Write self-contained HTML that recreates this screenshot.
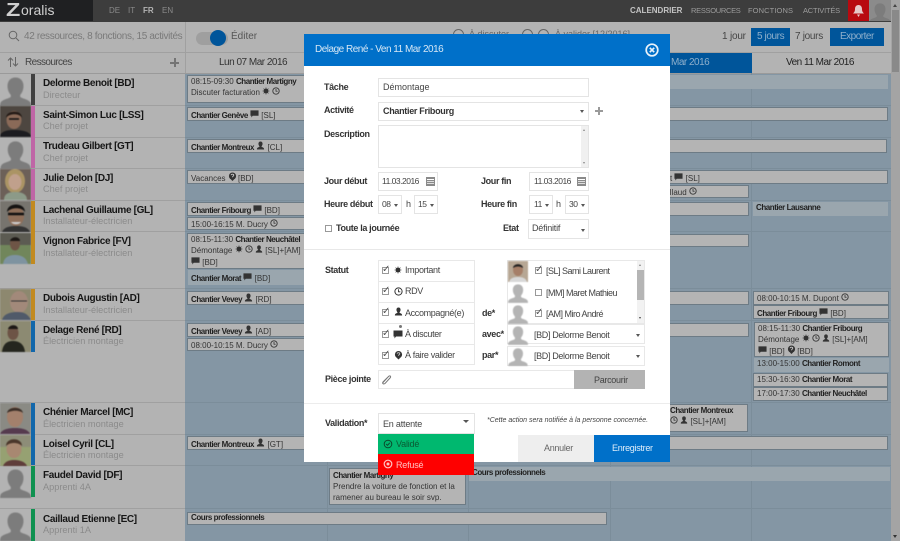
<!DOCTYPE html>
<html lang="fr"><head><meta charset="utf-8"><title>Zoralis</title>
<style>
*{box-sizing:border-box}
html,body{margin:0;padding:0}
body{width:900px;height:541px;overflow:hidden;position:relative;background:#b3b3b3;font-family:"Liberation Sans",sans-serif;font-size:9px;color:#222}
.a,.a *{position:absolute}
.a{left:0;top:0;width:900px;height:541px}
div,span.t{white-space:nowrap}
.line{background:#a0a0a0}
.name{left:43px;font-size:10px;font-weight:bold;color:#161616;letter-spacing:-.35px}
.role{left:43px;font-size:9.2px;color:#8b8b8b}
.bar{width:4px}
.ev{background:#b4b4b4;border:1px solid #6d7b85;font-size:8px;line-height:10px;padding:1px 3px;color:#333;overflow:hidden}
.lt{background:#9aa6ae;font-size:8px;line-height:10px;padding:1px 3px;color:#333}
.ev b,.lt b{color:#222;position:static;letter-spacing:-.45px}
.ev *,.lt *{position:static}
.lab{font-size:9px;font-weight:bold;color:#333;letter-spacing:-.35px}
.in{background:#fff;border:1px solid #e4e4e4;font-size:9px;color:#444;line-height:17px;padding-left:4px}
.dt{font-size:8.5px;letter-spacing:-.5px}
.arr{width:0;height:0;border-left:2.5px solid transparent;border-right:2.5px solid transparent;border-top:3px solid #555}
.cb{width:7px;height:7px;border:1px solid #999;background:#fff}
.ck{font-size:10px;color:#555;line-height:10px}
.st{font-size:9px;color:#444;letter-spacing:-.35px}
svg{overflow:visible}
svg[width="31"],svg[width="20"]{filter:blur(.5px)}
</style></head><body>
<svg width="0" height="0" style="position:absolute"><defs>
<symbol id="sil" viewBox="0 0 31 32"><path d="M15.500 3.500c5 0 8 3.500 8 8.500 0 3.500-1.300 6.500-3 8.500-.6 1-.5 2.500.5 3 3 1.500 7 2 9 4.500.5.700 1 2 1 4H0c0-2 .5-3.300 1-4 2-2.500 6-3 9-4.500 1-.5 1.100-2 .5-3-1.700-2-3-5-3-8.500 0-5 3-8.500 8-8.500z" fill="#7c7c7c"/></symbol>
<symbol id="sil2" viewBox="0 0 31 32"><path d="M15.500 3.500c5 0 8 3.500 8 8.500 0 3.500-1.300 6.500-3 8.500-.6 1-.5 2.500.5 3 3 1.500 7 2 9 4.500.5.700 1 2 1 4H0c0-2 .5-3.300 1-4 2-2.500 6-3 9-4.500 1-.5 1.100-2 .5-3-1.700-2-3-5-3-8.500 0-5 3-8.500 8-8.500z" fill="#b4b4b4"/></symbol>
<symbol id="clk" viewBox="0 0 10 10"><circle cx="5" cy="5" r="4" fill="none" stroke="#333" stroke-width="1.100"/><path d="M5 2.500V5.300H7" fill="none" stroke="#333"/></symbol>
<symbol id="usr" viewBox="0 0 10 10"><path d="M5 .5c1.500 0 2.300 1 2.300 2.500S6.500 5.500 6 6c0 .8 3 1 3 3v.5H1V9c0-2 3-2.200 3-3-.5-.5-1.300-1.500-1.300-3S3.500.5 5 .5z" fill="#333"/></symbol>
<symbol id="msg" viewBox="0 0 10 10"><path d="M.5 1.500h9v6H3L1.500 9.500V7.500h-1z" fill="#333"/></symbol>
<symbol id="sun" viewBox="0 0 10 10"><circle cx="5" cy="5" r="2.800" fill="#333"/><path d="M5 .8v8.400M.8 5h8.400M2 2l6 6M8 2l-6 6" stroke="#333"/></symbol>
<symbol id="qst" viewBox="0 0 10 10"><circle cx="5" cy="4.500" r="4" fill="#333"/><path d="M3.500 3.500C3.700 2 6.400 2 6.400 3.600 6.400 4.600 5 4.600 5 5.800" fill="none" stroke="#ccc"/><path d="M3 8l2 2 2-2z" fill="#333"/></symbol>
</defs></svg>
<div class="a">

<!-- top bar -->
<div style="left:0;top:0;width:900px;height:22px;background:#3d3d3d"></div>
<div style="left:0;top:0;width:93px;height:21px;background:#1f2022"></div>
<div style="left:6px;top:0;font-size:18px;line-height:20px;font-weight:bold;color:#cfcfcf;transform:scaleX(1.3);transform-origin:left">Z</div>
<div style="left:21px;top:0;font-size:14px;line-height:21px;color:#cfcfcf">oralis</div>
<div style="left:109px;top:6px;font-size:8px;color:#8a8a8a">DE</div>
<div style="left:128px;top:6px;font-size:8px;color:#8a8a8a">IT</div>
<div style="left:143px;top:6px;font-size:8px;font-weight:bold;color:#b3b3b3">FR</div>
<div style="left:162px;top:6px;font-size:8px;color:#8a8a8a">EN</div>
<div style="left:630px;top:6px;font-size:8px;font-weight:bold;color:#c4c4c4">CALENDRIER</div>
<div style="left:691px;top:6px;font-size:7.5px;letter-spacing:-.3px;color:#9c9c9c">RESSOURCES</div>
<div style="left:748px;top:6px;font-size:7.5px;letter-spacing:.1px;color:#9c9c9c">FONCTIONS</div>
<div style="left:803px;top:6px;font-size:7.5px;letter-spacing:-.2px;color:#9c9c9c">ACTIVITÉS</div>
<div style="left:848px;top:0;width:21px;height:21px;background:#b8090f"></div>
<svg style="left:853px;top:4px" width="11" height="13" viewBox="0 0 11 13"><path d="M5.500 1c2.500 0 3.500 2 3.500 4 0 2.500 1 3.500 2 4.500H0c1-1 2-2 2-4.500 0-2 1-4 3.500-4z M4 10.500h3L5.500 13z" fill="#e6c8c8"/></svg>
<div style="left:869px;top:0;width:22px;height:21px;background:#8b8b8b;overflow:hidden"><svg style="left:0;top:1px" width="22" height="22"><use href="#sil" width="22" height="22"/></svg></div>
<!-- scrollbar -->
<div style="left:891px;top:0;width:9px;height:541px;background:#a4a4a4"></div>
<div style="left:892px;top:10px;width:7px;height:62px;background:#898989"></div>
<div class="arr" style="left:893px;top:4px;border-top:0;border-bottom:3px solid #444"></div>
<div class="arr" style="left:893px;top:535px;border-top:3px solid #333"></div>

<!-- toolbar -->
<div style="left:185px;top:22px;width:1px;height:51px;background:#a0a0a0"></div>
<div style="left:0;top:52px;width:891px;height:1px;background:#a0a0a0"></div>
<svg style="left:8px;top:30px" width="11" height="12"><circle cx="5" cy="5" r="3.800" fill="none" stroke="#666" stroke-width="1"/><path d="M8 8l3 3" stroke="#666"/></svg>
<div style="left:24px;top:31px;font-size:10px;color:#7a7a7a;letter-spacing:-.35px">42 ressources, 8 fonctions, 15 activités</div>
<div style="left:196px;top:32px;width:32px;height:13px;border-radius:7px;background:#9f9f9f"></div>
<div style="left:210px;top:30px;width:16px;height:16px;border-radius:50%;background:#00559a"></div>
<div style="left:231px;top:31px;font-size:10px;color:#555">Éditer</div>
<!-- filter fragments above the modal -->
<div style="left:453px;top:29px;width:11px;height:11px;border:1px solid #666;border-radius:50%"></div>
<div style="left:469px;top:29px;font-size:9px;color:#666">À discuter</div>
<div style="left:522px;top:29px;width:11px;height:11px;border:1px solid #666;border-radius:50%"></div>
<div style="left:538px;top:29px;width:11px;height:11px;border:1px solid #666;border-radius:50%"></div>
<div style="left:555px;top:29px;font-size:9px;color:#666">À valider [12/2016]</div>
<div style="left:722px;top:31px;font-size:10px;color:#444;letter-spacing:-.2px">1 jour</div>
<div style="left:751px;top:28px;width:39px;height:18px;background:#00559a"></div>
<div style="left:757px;top:31px;font-size:10px;color:#8fb0cc;letter-spacing:-.4px">5 jours</div>
<div style="left:795px;top:31px;font-size:10px;color:#444;letter-spacing:-.3px">7 jours</div>
<div style="left:830px;top:28px;width:54px;height:18px;background:#00559a"></div>
<div style="left:840px;top:31px;font-size:10px;color:#8fb0cc;letter-spacing:-.5px">Exporter</div>

<!-- col headers -->
<svg style="left:7px;top:56px" width="12" height="12"><path d="M3.500 11V2M1 4.500L3.500 2 6 4.500M8.500 1v9M6 7.500L8.500 10 11 7.500" fill="none" stroke="#666"/></svg>
<div style="left:25px;top:57px;font-size:10px;color:#444;letter-spacing:-.6px">Ressources</div>
<div style="left:170px;top:62px;width:9px;height:2px;background:#747474"></div>
<div style="left:174px;top:58px;width:2px;height:9px;background:#747474"></div>
<div style="left:219px;top:57px;font-size:10px;color:#333;letter-spacing:-.5px">Lun 07 Mar 2016</div>
<div style="left:611px;top:53px;width:141px;height:21px;background:#00559a"></div>
<div style="left:671px;top:57px;font-size:10px;color:#8fb0cc;letter-spacing:-.5px">Mar 2016</div>
<div style="left:786px;top:57px;font-size:10px;color:#222;letter-spacing:-.5px">Ven 11 Mar 2016</div>

<!-- grid -->
<div style="left:185px;top:73px;width:706px;height:468px;background:#8496a4"></div>
<div style="left:0;top:73px;width:891px;height:1px;background:#9a9a9a"></div>
<div style="left:327px;top:73px;width:1px;height:468px;background:#7b8d9a"></div>
<div style="left:468px;top:73px;width:1px;height:468px;background:#7b8d9a"></div>
<div style="left:610px;top:73px;width:1px;height:468px;background:#7b8d9a"></div>
<div style="left:751px;top:73px;width:1px;height:468px;background:#7b8d9a"></div>
<div class="line" style="left:0;top:105px;width:185px;height:1px"></div><div style="left:185px;top:105px;width:706px;height:1px;background:#7b8d9a"></div>
<div class="line" style="left:0;top:137px;width:185px;height:1px"></div><div style="left:185px;top:137px;width:706px;height:1px;background:#7b8d9a"></div>
<div class="line" style="left:0;top:168px;width:185px;height:1px"></div><div style="left:185px;top:168px;width:706px;height:1px;background:#7b8d9a"></div>
<div class="line" style="left:0;top:200px;width:185px;height:1px"></div><div style="left:185px;top:200px;width:706px;height:1px;background:#7b8d9a"></div>
<div class="line" style="left:0;top:231px;width:185px;height:1px"></div><div style="left:185px;top:231px;width:706px;height:1px;background:#7b8d9a"></div>
<div class="line" style="left:0;top:288px;width:185px;height:1px"></div><div style="left:185px;top:288px;width:706px;height:1px;background:#7b8d9a"></div>
<div class="line" style="left:0;top:320px;width:185px;height:1px"></div><div style="left:185px;top:320px;width:706px;height:1px;background:#7b8d9a"></div>
<div class="line" style="left:0;top:402px;width:185px;height:1px"></div><div style="left:185px;top:402px;width:706px;height:1px;background:#7b8d9a"></div>
<div class="line" style="left:0;top:434px;width:185px;height:1px"></div><div style="left:185px;top:434px;width:706px;height:1px;background:#7b8d9a"></div>
<div class="line" style="left:0;top:465px;width:185px;height:1px"></div><div style="left:185px;top:465px;width:706px;height:1px;background:#7b8d9a"></div>
<div class="line" style="left:0;top:508px;width:185px;height:1px"></div><div style="left:185px;top:508px;width:706px;height:1px;background:#7b8d9a"></div>

<!-- portraits -->
<svg style="left:0;top:74px" width="31" height="32"><use href="#sil"/></svg>
<svg style="left:0;top:106px" width="31" height="31" viewBox="0 0 31 31"><rect width="31" height="31" fill="#4d4640"/><ellipse cx="14" cy="14" rx="7.500" ry="9" fill="#8a6a58"/><path d="M6 12C6 4 22 3 22 12 20 7 9 7 6 12z" fill="#231a16"/><path d="M9 13h10" stroke="#111" stroke-width="1.500"/><path d="M0 31c0-6 8-7 14-7s17 1 17 7z" fill="#1b1b1f"/></svg>
<svg style="left:0;top:138px" width="31" height="31"><use href="#sil"/></svg>
<svg style="left:0;top:169px" width="31" height="31" viewBox="0 0 31 31"><rect width="31" height="31" fill="#6c6058"/><ellipse cx="15" cy="12" rx="10" ry="12" fill="#ab9464"/><ellipse cx="15" cy="13" rx="6.500" ry="8" fill="#c0a08c"/><path d="M4 31c0-7 6-8 11-8s12 1 12 8z" fill="#8c9a88"/></svg>
<svg style="left:0;top:201px" width="31" height="31" viewBox="0 0 31 31"><rect width="31" height="31" fill="#77746e"/><ellipse cx="16" cy="15" rx="8" ry="10" fill="#8f6f5a"/><path d="M7 11C7 1 25 1 25 11 22 6 11 6 7 11z" fill="#151312"/><path d="M8 13h16" stroke="#111" stroke-width="2.500"/><path d="M11 21c2 3 8 3 10 0" fill="#ccc"/><path d="M2 31c2-5 8-6 14-6s12 1 14 6z" fill="#333"/></svg>
<svg style="left:0;top:233px" width="31" height="31" viewBox="0 0 31 31"><rect width="31" height="12" fill="#5c5b52"/><rect y="12" width="31" height="19" fill="#71865b"/><ellipse cx="15" cy="11" rx="5" ry="6.500" fill="#6e5546"/><path d="M10 8c1-5 10-5 10 0z" fill="#1c1815"/><path d="M3 31c1-8 8-9 12-9s11 1 13 9z" fill="#7e93a0"/></svg>
<svg style="left:0;top:289px" width="31" height="31" viewBox="0 0 31 31"><rect width="31" height="31" fill="#8d886f"/><ellipse cx="19" cy="13" rx="9" ry="11" fill="#a2897a"/><path d="M11 12h16" stroke="#333" stroke-width="1"/><path d="M2 31c2-7 10-8 16-8s10 2 13 8z" fill="#505a69"/></svg>
<svg style="left:0;top:321px" width="31" height="31" viewBox="0 0 31 31"><rect width="31" height="31" fill="#8c8a72"/><ellipse cx="13" cy="12" rx="5.500" ry="7" fill="#6d5446"/><path d="M8 8c1-5 10-5 10 0z" fill="#1c1815"/><path d="M2 31c1-9 6-11 11-11s11 2 12 11z" fill="#25261f"/></svg>
<svg style="left:0;top:403px" width="31" height="31" viewBox="0 0 31 31"><rect width="31" height="31" fill="#8a8a84"/><ellipse cx="15" cy="14" rx="8" ry="10" fill="#a3806c"/><path d="M7 10C8 3 22 3 23 10 20 7 11 7 7 10z" fill="#3c2f28"/><path d="M0 31c2-5 9-6 15-6s13 1 15 6z" fill="#553a4e"/></svg>
<svg style="left:0;top:435px" width="31" height="31" viewBox="0 0 31 31"><rect width="31" height="12" fill="#8d8d78"/><rect y="12" width="31" height="19" fill="#96a172"/><ellipse cx="14" cy="14" rx="7.500" ry="9" fill="#a88871"/><path d="M6 11C6 2 22 2 22 11 18 7 10 7 6 11z" fill="#4b372b"/><path d="M3 31c2-5 7-6 11-6s11 1 13 6z" fill="#5f3d3a"/></svg>
<svg style="left:0;top:466px" width="31" height="32"><use href="#sil"/></svg>
<svg style="left:0;top:509px" width="31" height="32"><use href="#sil"/></svg>

<!-- color bars -->
<div class="bar" style="left:31px;top:74px;height:31px;background:#404040"></div>
<div class="bar" style="left:31px;top:106px;height:62px;background:#bf66a6"></div>
<div class="bar" style="left:31px;top:169px;height:31px;background:#bf66a6"></div>
<div class="bar" style="left:31px;top:201px;height:63px;background:#c28a20"></div>
<div class="bar" style="left:31px;top:289px;height:31px;background:#c28a20"></div>
<div class="bar" style="left:31px;top:321px;height:31px;background:#1267ab"></div>
<div class="bar" style="left:31px;top:403px;height:62px;background:#1267ab"></div>
<div class="bar" style="left:31px;top:466px;height:31px;background:#0f9150"></div>
<div class="bar" style="left:31px;top:509px;height:32px;background:#0f9150"></div>

<!-- names -->
<div class="name" style="top:78px">Delorme Benoit [BD]</div><div class="role" style="top:90px">Directeur</div>
<div class="name" style="top:110px">Saint-Simon Luc [LSS]</div><div class="role" style="top:121px">Chef projet</div>
<div class="name" style="top:141px">Trudeau Gilbert [GT]</div><div class="role" style="top:153px">Chef projet</div>
<div class="name" style="top:173px">Julie Delon [DJ]</div><div class="role" style="top:184px">Chef projet</div>
<div class="name" style="top:205px">Lachenal Guillaume [GL]</div><div class="role" style="top:216px">Installateur-électricien</div>
<div class="name" style="top:236px">Vignon Fabrice [FV]</div><div class="role" style="top:248px">Installateur-électricien</div>
<div class="name" style="top:293px">Dubois Augustin [AD]</div><div class="role" style="top:305px">Installateur-électricien</div>
<div class="name" style="top:325px">Delage René [RD]</div><div class="role" style="top:336px">Électricien montage</div>
<div class="name" style="top:407px">Chénier Marcel [MC]</div><div class="role" style="top:419px">Électricien montage</div>
<div class="name" style="top:439px">Loisel Cyril [CL]</div><div class="role" style="top:450px">Électricien montage</div>
<div class="name" style="top:470px">Faudel David [DF]</div><div class="role" style="top:482px">Apprenti 4A</div>
<div class="name" style="top:514px">Caillaud Etienne [EC]</div><div class="role" style="top:525px">Apprenti 1A</div>

<!-- events -->
<div class="lt" style="left:470px;top:75px;width:418px;height:14px"></div>
<div class="ev" style="left:187px;top:75px;width:140px;height:28px">08:15-09:30 <b>Chantier Martigny</b><br>Discuter facturation <svg width="8" height="8"><use href="#sun" width="8" height="8"/></svg> <svg width="8" height="8"><use href="#clk" width="8" height="8"/></svg></div>
<div class="ev" style="left:187px;top:107px;width:701px;height:14px"><b>Chantier Genève</b> <svg width="9" height="9"><use href="#msg" width="9" height="9"/></svg> [SL]</div>
<div class="ev" style="left:187px;top:139px;width:700px;height:14px"><b>Chantier Montreux</b> <svg width="9" height="9"><use href="#usr" width="9" height="9"/></svg> [CL]</div>
<div class="ev" style="left:187px;top:170px;width:701px;height:14px">Vacances <svg width="8" height="9"><use href="#qst" width="9" height="9"/></svg> [BD]</div>
<div class="ev" style="left:670px;top:170px;width:218px;height:14px;border-left:0;padding-left:0">t <svg width="9" height="9"><use href="#msg" width="9" height="9"/></svg> [SL]</div>
<div class="ev" style="left:640px;top:185px;width:109px;height:13px;padding-left:27px">illaud <svg width="8" height="8"><use href="#clk" width="8" height="8"/></svg></div>
<div class="ev" style="left:187px;top:202px;width:562px;height:14px"><b>Chantier Fribourg</b> <svg width="9" height="9"><use href="#msg" width="9" height="9"/></svg> [BD]</div>
<div class="ev" style="left:187px;top:217px;width:140px;height:13px">15:00-16:15 M. Ducry <svg width="8" height="8"><use href="#clk" width="8" height="8"/></svg></div>
<div class="lt" style="left:753px;top:202px;width:135px;height:14px"><b>Chantier Lausanne</b></div>
<div class="ev" style="left:187px;top:233px;width:140px;height:36px">08:15-11:30 <b>Chantier Neuchâtel</b><br>Démontage <svg width="8" height="8"><use href="#sun" width="8" height="8"/></svg> <svg width="8" height="8"><use href="#clk" width="8" height="8"/></svg> <svg width="8" height="8"><use href="#usr" width="8" height="8"/></svg> [SL]+[AM]<br><svg width="9" height="9"><use href="#msg" width="9" height="9"/></svg> [BD]</div>
<div class="lt" style="left:188px;top:270px;width:139px;height:15px;padding-top:2px"><b>Chantier Morat</b> <svg width="9" height="9"><use href="#msg" width="9" height="9"/></svg> [BD]</div>
<div class="ev" style="left:640px;top:234px;width:109px;height:13px"></div>
<div class="ev" style="left:187px;top:291px;width:562px;height:14px"><b>Chantier Vevey</b> <svg width="9" height="9"><use href="#usr" width="9" height="9"/></svg> [RD]</div>
<div class="ev" style="left:753px;top:291px;width:136px;height:14px">08:00-10:15 M. Dupont <svg width="8" height="8"><use href="#clk" width="8" height="8"/></svg></div>
<div class="ev" style="left:753px;top:305px;width:136px;height:14px"><b>Chantier Fribourg</b> <svg width="9" height="9"><use href="#msg" width="9" height="9"/></svg> [BD]</div>
<div class="ev" style="left:187px;top:323px;width:562px;height:14px"><b>Chantier Vevey</b> <svg width="9" height="9"><use href="#usr" width="9" height="9"/></svg> [AD]</div>
<div class="ev" style="left:187px;top:338px;width:140px;height:13px">08:00-10:15 M. Ducry <svg width="8" height="8"><use href="#clk" width="8" height="8"/></svg></div>
<div class="ev" style="left:754px;top:322px;width:135px;height:35px">08:15-11:30 <b>Chantier Fribourg</b><br>Démontage <svg width="8" height="8"><use href="#sun" width="8" height="8"/></svg> <svg width="8" height="8"><use href="#clk" width="8" height="8"/></svg> <svg width="8" height="8"><use href="#usr" width="8" height="8"/></svg> [SL]+[AM]<br><svg width="9" height="9"><use href="#msg" width="9" height="9"/></svg> [BD] <svg width="8" height="9"><use href="#qst" width="9" height="9"/></svg> [BD]</div>
<div class="lt" style="left:754px;top:358px;width:135px;height:14px">13:00-15:00 <b>Chantier Romont</b></div>
<div class="ev" style="left:753px;top:373px;width:135px;height:14px">15:30-16:30 <b>Chantier Morat</b></div>
<div class="ev" style="left:753px;top:387px;width:135px;height:14px">17:00-17:30 <b>Chantier Neuchâtel</b></div>
<div class="ev" style="left:640px;top:404px;width:108px;height:28px;padding-left:29px"><b>Chantier Montreux</b><br><svg width="8" height="8"><use href="#clk" width="8" height="8"/></svg> <svg width="8" height="8"><use href="#usr" width="8" height="8"/></svg> [SL]+[AM]</div>
<div class="ev" style="left:187px;top:436px;width:701px;height:14px"><b>Chantier Montreux</b> <svg width="9" height="9"><use href="#usr" width="9" height="9"/></svg> [GT]</div>
<div class="lt" style="left:469px;top:467px;width:421px;height:14px"><b>Cours professionnels</b></div>
<div class="ev" style="left:329px;top:468px;width:137px;height:37px;line-height:11px"><b>Chantier Martigny</b><br>Prendre la voiture de fonction et la<br>ramener au bureau le soir svp.</div>
<div class="ev" style="left:187px;top:512px;width:420px;height:13px;padding-top:0"><b>Cours professionnels</b></div>

<!-- modal -->
<div style="left:304px;top:34px;width:366px;height:428px;background:#fff"></div>
<div style="left:304px;top:34px;width:366px;height:32px;background:#0070c9"></div>
<div style="left:315px;top:44px;font-size:10px;letter-spacing:-.5px;color:#d6e7f5">Delage René - Ven 11 Mar 2016</div>
<svg style="left:645px;top:43px" width="14" height="14"><circle cx="7" cy="7" r="5.800" fill="none" stroke="#e8f2fa" stroke-width="1.700"/><path d="M4.800 4.800l4.400 4.400M9.200 4.800l-4.400 4.400" stroke="#e8f2fa" stroke-width="1.700"/></svg>

<div class="lab" style="left:324px;top:82px">Tâche</div>
<div class="in" style="left:378px;top:78px;width:211px;height:19px">Démontage</div>
<div class="lab" style="left:324px;top:105px">Activité</div>
<div class="in" style="left:378px;top:102px;width:211px;height:19px;font-weight:bold;color:#333;letter-spacing:-.3px">Chantier Fribourg</div>
<div class="arr" style="left:580px;top:110px"></div>
<div style="left:595px;top:110px;width:8px;height:2px;background:#9a9a9a"></div>
<div style="left:598px;top:107px;width:2px;height:8px;background:#9a9a9a"></div>
<div class="lab" style="left:324px;top:129px">Description</div>
<div class="in" style="left:378px;top:125px;width:211px;height:43px"></div>
<div style="left:581px;top:126px;width:7px;height:41px;background:#f0f0f0"></div>
<div class="arr" style="left:583px;top:129px;border-top:0;border-bottom:2px solid #888;border-left-width:1.500px;border-right-width:1.500px"></div>
<div class="arr" style="left:583px;top:162px;border-top:2px solid #888;border-left-width:1.500px;border-right-width:1.500px"></div>
<div class="lab" style="left:324px;top:176px">Jour début</div>
<div class="in dt" style="left:378px;top:172px;width:60px;height:19px;padding-left:3px">11.03.2016</div>
<svg style="left:426px;top:176px" width="9" height="10"><rect x="0" y="1" width="9" height="9" fill="#8a8a8a"/><rect x="1" y="3" width="7" height="1" fill="#fff"/><rect x="1" y="5" width="7" height="1" fill="#ddd"/><rect x="1" y="7" width="7" height="1" fill="#ddd"/></svg>
<div class="lab" style="left:481px;top:176px">Jour fin</div>
<div class="in dt" style="left:529px;top:172px;width:60px;height:19px;padding-left:4px">11.03.2016</div>
<svg style="left:577px;top:176px" width="9" height="10"><rect x="0" y="1" width="9" height="9" fill="#8a8a8a"/><rect x="1" y="3" width="7" height="1" fill="#fff"/><rect x="1" y="5" width="7" height="1" fill="#ddd"/><rect x="1" y="7" width="7" height="1" fill="#ddd"/></svg>
<div class="lab" style="left:324px;top:199px">Heure début</div>
<div class="in dt" style="left:378px;top:195px;width:24px;height:19px;padding-left:3px">08</div><div class="arr" style="left:394px;top:204px"></div>
<div class="st" style="left:406px;top:199px">h</div>
<div class="in dt" style="left:414px;top:195px;width:24px;height:19px;padding-left:3px">15</div><div class="arr" style="left:430px;top:204px"></div>
<div class="lab" style="left:481px;top:199px">Heure fin</div>
<div class="in dt" style="left:529px;top:195px;width:24px;height:19px;padding-left:4px">11</div><div class="arr" style="left:545px;top:204px"></div>
<div class="st" style="left:556px;top:199px">h</div>
<div class="in dt" style="left:565px;top:195px;width:24px;height:19px;padding-left:3px">30</div><div class="arr" style="left:581px;top:204px"></div>
<div class="cb" style="left:325px;top:225px"></div>
<div class="lab" style="left:336px;top:223px">Toute la journée</div>
<div class="lab" style="left:503px;top:223px">Etat</div>
<div class="in" style="left:528px;top:219px;width:61px;height:20px;padding-left:3px;letter-spacing:-.2px">Définitif</div><div class="arr" style="left:581px;top:229px"></div>
<div style="left:304px;top:249px;width:366px;height:1px;background:#e8e8e8"></div>

<div class="lab" style="left:325px;top:265px">Statut</div>
<div style="left:378px;top:260px;width:97px;height:105px;border:1px solid #e8e8e8"></div>
<div style="left:379px;top:281px;width:95px;height:1px;background:#e8e8e8"></div>
<div style="left:379px;top:302px;width:95px;height:1px;background:#e8e8e8"></div>
<div style="left:379px;top:323px;width:95px;height:1px;background:#e8e8e8"></div>
<div style="left:379px;top:344px;width:95px;height:1px;background:#e8e8e8"></div>

<div class="cb" style="left:382px;top:267px"></div><div class="ck" style="left:382px;top:265px">✓</div>
<svg style="left:394px;top:266px" width="8" height="8"><use href="#sun" width="8" height="8"/></svg>
<div class="st" style="left:405px;top:265px">Important</div>
<div class="cb" style="left:382px;top:288px"></div><div class="ck" style="left:382px;top:286px">✓</div>
<svg style="left:394px;top:287px" width="9" height="9"><use href="#clk" width="9" height="9"/></svg>
<div class="st" style="left:405px;top:286px">RDV</div>
<div class="cb" style="left:382px;top:309px"></div><div class="ck" style="left:382px;top:307px">✓</div>
<svg style="left:394px;top:307px" width="9" height="9"><use href="#usr" width="9" height="9"/></svg>
<div class="st" style="left:405px;top:308px">Accompagné(e)</div>
<div class="cb" style="left:382px;top:331px"></div><div class="ck" style="left:382px;top:329px">✓</div>
<svg style="left:393px;top:329px" width="10" height="10"><use href="#msg" width="10" height="10"/></svg>
<div style="left:399px;top:325px;width:3px;height:3px;border-radius:50%;background:#777"></div>
<div class="st" style="left:405px;top:329px">À discuter</div>
<div class="cb" style="left:382px;top:352px"></div><div class="ck" style="left:382px;top:350px">✓</div>
<svg style="left:394px;top:350px" width="9" height="10"><use href="#qst" width="9" height="10"/></svg>
<div class="st" style="left:405px;top:350px">À faire valider</div>

<div class="lab" style="left:482px;top:308px">de*</div>
<div class="lab" style="left:482px;top:329px">avec*</div>
<div class="lab" style="left:482px;top:350px">par*</div>

<div style="left:507px;top:260px;width:138px;height:64px;border:1px solid #e8e8e8"></div>
<div style="left:507px;top:324px;width:138px;height:20px;border:1px solid #e8e8e8"></div>
<div style="left:507px;top:346px;width:138px;height:20px;border:1px solid #e8e8e8"></div>
<svg style="left:508px;top:261px" width="20" height="21" viewBox="0 0 20 21"><rect width="20" height="21" fill="#b7a794"/><ellipse cx="10" cy="9" rx="5" ry="6" fill="#a67f68"/><path d="M5 7c0-5 10-5 10 0-3-2-7-2-10 0z" fill="#222"/><path d="M1 21c1-4 5-5 9-5s8 1 9 5z" fill="#d8d8d8"/></svg>
<svg style="left:508px;top:282px" width="20" height="21"><use href="#sil2" width="20" height="21"/></svg>
<svg style="left:508px;top:303px" width="20" height="21"><use href="#sil2" width="20" height="21"/></svg>
<svg style="left:508px;top:324px" width="20" height="21"><use href="#sil2" width="20" height="21"/></svg>
<svg style="left:508px;top:346px" width="20" height="20"><use href="#sil2" width="20" height="20"/></svg>
<div class="cb" style="left:535px;top:267px"></div><div class="ck" style="left:535px;top:265px">✓</div>
<div class="st" style="left:546px;top:266px;letter-spacing:-.5px">[SL] Sami Laurent</div>
<div class="cb" style="left:535px;top:289px"></div>
<div class="st" style="left:546px;top:288px;letter-spacing:-.5px">[MM] Maret Mathieu</div>
<div class="cb" style="left:535px;top:310px"></div><div class="ck" style="left:535px;top:308px">✓</div>
<div class="st" style="left:546px;top:309px;letter-spacing:-.5px">[AM] Miro André</div>
<div style="left:637px;top:261px;width:7px;height:62px;background:#f2f2f2"></div>
<div style="left:637px;top:270px;width:7px;height:30px;background:#b5b5b5"></div>
<div class="arr" style="left:639px;top:264px;border-top:0;border-bottom:2px solid #888;border-left-width:1.500px;border-right-width:1.500px"></div>
<div class="arr" style="left:639px;top:317px;border-top:2px solid #444;border-left-width:1.500px;border-right-width:1.500px"></div>
<div class="st" style="left:534px;top:330px">[BD] Delorme Benoit</div><div class="arr" style="left:636px;top:334px"></div>
<div class="st" style="left:534px;top:351px">[BD] Delorme Benoit</div><div class="arr" style="left:636px;top:355px"></div>

<div class="lab" style="left:325px;top:374px">Pièce jointe</div>
<div style="left:378px;top:370px;width:267px;height:19px;border:1px solid #e8e8e8"></div>
<svg style="left:381px;top:374px" width="11" height="11" viewBox="0 0 11 11"><path d="M2 8.500L7.500 2.500C9 1 10.500 2.500 9 4L4 9.500C2.500 10.500 1 9.500 2 8L6.500 3.500" fill="none" stroke="#777"/></svg>
<div style="left:574px;top:370px;width:71px;height:19px;background:#b3b3b3"></div>
<div style="left:594px;top:375px;font-size:9px;letter-spacing:-.3px;color:#444">Parcourir</div>
<div style="left:304px;top:403px;width:366px;height:1px;background:#ececec"></div>

<div class="lab" style="left:325px;top:418px">Validation*</div>
<div class="in" style="left:378px;top:413px;width:97px;height:21px;line-height:20px;letter-spacing:-.2px">En attente</div>
<div class="arr" style="left:463px;top:420px;border-left-width:3px;border-right-width:3px;border-top-width:3px"></div>
<div style="left:487px;top:417px;font-size:7px;font-style:italic;color:#444">*Cette action sera notifiée à la personne concernée.</div>
<div style="left:518px;top:435px;width:76px;height:27px;background:#eeeeee"></div>
<div style="left:544px;top:443px;font-size:9px;letter-spacing:-.3px;color:#666">Annuler</div>
<div style="left:594px;top:435px;width:76px;height:27px;background:#0070c9"></div>
<div style="left:612px;top:443px;font-size:9px;letter-spacing:-.3px;color:#dfeefa">Enregistrer</div>
<div style="left:378px;top:434px;width:96px;height:20px;background:#00b86f"></div>
<svg style="left:383px;top:439px" width="10" height="10"><circle cx="5" cy="5" r="3.800" fill="none" stroke="#0b4a2c"/><path d="M3.200 5l1.300 1.300 2.300-2.500" fill="none" stroke="#0b4a2c"/></svg>
<div style="left:396px;top:439px;font-size:9px;letter-spacing:-.2px;color:#0a5a33">Validé</div>
<div style="left:378px;top:454px;width:96px;height:21px;background:#fe0000"></div>
<svg style="left:383px;top:459px" width="10" height="10"><circle cx="5" cy="5" r="3.800" fill="none" stroke="#ffc4c4" stroke-width="1.200"/><circle cx="5" cy="5" r="1.500" fill="#ffc4c4"/></svg>
<div style="left:396px;top:460px;font-size:9px;letter-spacing:-.2px;color:#ffc0c0">Refusé</div>
</div>
</body></html>
